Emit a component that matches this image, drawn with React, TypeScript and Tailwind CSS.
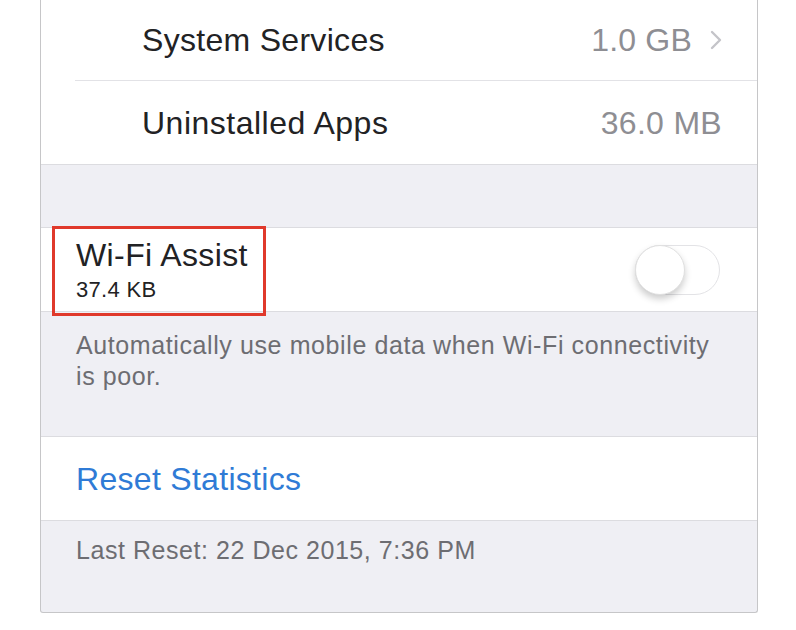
import React from 'react';

const font = { fontFamily: '"Liberation Sans", Arial, sans-serif' };

function Chevron() {
  return (
    <svg width="12" height="20" viewBox="0 0 12 20" className="shrink-0">
      <polyline points="2,2 10,10 2,18" fill="none" stroke="#c4c4c9" strokeWidth="2.4" strokeLinecap="round" strokeLinejoin="round" />
    </svg>
  );
}

function Toggle() {
  return (
    <div className="w-[85px] h-[50px] rounded-full border-[1.5px] border-[#e3e3e6] bg-white relative shrink-0">
      <div className="absolute left-[-1px] top-[-1px] w-[50px] h-[50px] rounded-full bg-white border border-[#e0e0e0] shadow-[0_4px_7px_rgba(0,0,0,0.2)]" />
    </div>
  );
}

export default function App() {
  return (
    <div className="w-[796px] h-[630px] bg-white relative overflow-hidden" style={font}>
      {/* phone screen */}
      <div className="ml-[40px] w-[718px] h-[613px] bg-[#efeff4] border-x border-b border-[#c6c6c8] rounded-b-[3px] flex flex-col">
        {/* usage rows */}
        <div className="bg-white border-b border-[#dcdce0]">
          <div className="h-[80px] flex items-center pl-[101px] pr-[35px]">
            <span className="text-[32px] leading-none tracking-[0.3px] text-[#222224] flex-1">System Services</span>
            <span className="text-[32px] leading-none tracking-[0.2px] text-[#8e8e93] mr-[18px]">1.0 GB</span>
            <Chevron />
          </div>
          <div className="ml-[34px] h-px bg-[#e2e2e6]" />
          <div className="h-[83px] flex items-center pl-[101px] pr-[35px]">
            <span className="text-[32px] leading-none tracking-[0.5px] text-[#222224] flex-1">Uninstalled Apps</span>
            <span className="text-[32px] leading-none tracking-[0.3px] text-[#8e8e93]">36.0 MB</span>
          </div>
        </div>

        <div className="h-[62px]" />

        {/* Wi-Fi Assist */}
        <div className="h-[85px] bg-white border-y border-[#dcdce0] flex items-center pl-[35px] pr-[37px]">
          <div className="flex-1 flex flex-col">
            <span className="text-[32px] leading-none tracking-[0.4px] text-[#222224]">Wi-Fi Assist</span>
            <span className="text-[22px] leading-none tracking-[0.3px] text-[#222224] mt-2">37.4 KB</span>
          </div>
          <Toggle />
        </div>

        <div className="h-[124px] pt-[18px] pl-[35px] pr-[20px] text-[25px] leading-[31px] tracking-[0.6px] text-[#6d6d72]">
          Automatically use mobile data when Wi-Fi connectivity
          <br />
          is poor.
        </div>

        {/* Reset */}
        <div className="h-[85px] bg-white border-y border-[#dcdce0] flex items-center pl-[35px]">
          <span className="text-[32px] leading-none tracking-[0.3px] text-[#2f7bd6]">Reset Statistics</span>
        </div>

        <div className="pt-[14px] pl-[35px] text-[25px] leading-[31px] tracking-[0.55px] text-[#6d6d72]">
          Last Reset: 22 Dec 2015, 7:36 PM
        </div>
      </div>

      {/* annotation box */}
      <div className="absolute left-[52px] top-[226px] w-[214px] h-[90px] border-[3px] border-[#e0392b]" />
    </div>
  );
}
